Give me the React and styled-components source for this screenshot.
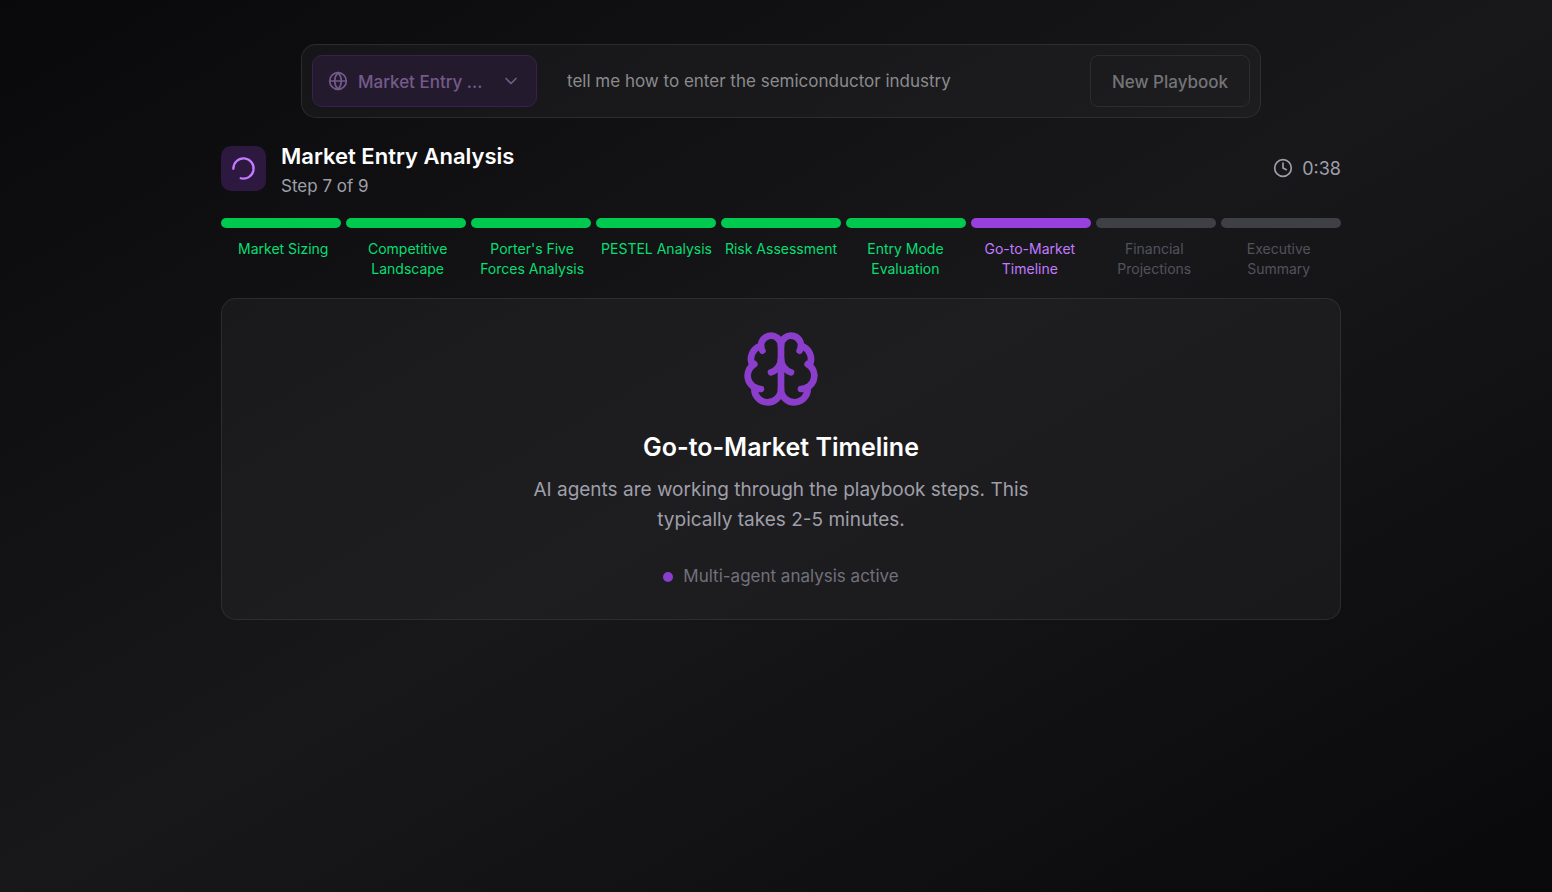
import React from "react";
import styled, { createGlobalStyle } from "styled-components";
import { Globe, ChevronDown, Clock, Brain } from "lucide-react";

const GlobalStyle = createGlobalStyle`
  *, *::before, *::after { box-sizing: border-box; }
  body {
    margin: 0;
    background: #09090b;
    font-family: Inter, "Liberation Sans", sans-serif;
  }
  h1, h2, p, ol { margin: 0; padding: 0; }
  button, input { font: inherit; }
`;

const Page = styled.main`
  min-height: 100vh;
  display: flex;
  flex-direction: column;
  align-items: center;
  padding: 44px 20px 40px 30px;
  background: linear-gradient(to bottom right, #09090b, #18181b, #09090b);
`;

const Toolbar = styled.form`
  width: 100%;
  max-width: 960px;
  display: flex;
  align-items: center;
  gap: 10px;
  padding: 10px;
  border: 1px solid rgba(63, 63, 70, 0.5);
  border-radius: 15px;
  background: rgba(39, 39, 42, 0.35);
`;

const PlaybookPicker = styled.button`
  width: 225px;
  height: 52px;
  flex: none;
  display: flex;
  align-items: center;
  gap: 10px;
  padding: 0 15px;
  border: 1px solid #3a1f50;
  border-radius: 10px;
  background: #231a2d;
  color: #745a8b;
  font-size: 17px;
  font-weight: 500;
`;

const PickerText = styled.span`
  flex: 1;
  padding-top: 2px;
  text-align: left;
  white-space: nowrap;
`;

const Query = styled.input`
  flex: 1;
  min-width: 0;
  height: 52px;
  padding: 0 20px;
  border: 0;
  background: transparent;
  color: #8b8b8d;
  font-size: 17px;
  outline: none;
`;

const NewPlaybook = styled.button`
  width: 160px;
  height: 52px;
  flex: none;
  padding: 2px 0 0;
  border: 1px solid #2d2d30;
  border-radius: 8px;
  background: transparent;
  color: #747477;
  font-size: 17px;
  font-weight: 500;
`;

const Progress = styled.section`
  width: 100%;
  max-width: 1120px;
  margin-top: 19px;
`;

const Header = styled.header`
  display: flex;
  align-items: center;
  gap: 15px;
`;

const SpinnerTile = styled.div`
  width: 45px;
  height: 45px;
  display: grid;
  place-items: center;
  border-radius: 10px;
  background: #2d193f;
  color: #c27aff;
`;

const Heading = styled.div`
  flex: 1;
  padding-top: 2px;
`;

const Title = styled.h1`
  color: #fff;
  font-size: 22px;
  font-weight: 600;
  line-height: 35px;
`;

const Subtitle = styled.p`
  color: #9f9fa9;
  font-size: 17px;
  line-height: 25px;
`;

const Elapsed = styled.div`
  display: flex;
  align-items: center;
  gap: 9px;
  color: #9f9fa9;
  font-size: 18px;
  line-height: 25px;
`;

const Bars = styled.div`
  display: flex;
  gap: 5px;
  margin-top: 19px;
`;

const barColors = { done: "#00c950", active: "#9840de", pending: "#3f3f46" };
const labelColors = { done: "#05df72", active: "#c27aff", pending: "#52525c" };

const Bar = styled.div`
  flex: 1;
  height: 10px;
  border-radius: 5px;
  background: ${({ $state }) => barColors[$state]};
`;

const Labels = styled.ol`
  display: flex;
  margin-top: 11px;
  list-style: none;
`;

const Label = styled.li`
  flex: 1 1 0;
  min-width: 0;
  padding: 0 2px;
  color: ${({ $state }) => labelColors[$state]};
  font-size: 14px;
  line-height: 20px;
  text-align: center;
`;

const Card = styled.section`
  display: flex;
  flex-direction: column;
  align-items: center;
  margin-top: 19px;
  padding: 30px;
  border: 1px solid rgba(63, 63, 70, 0.5);
  border-radius: 15px;
  background: rgba(39, 39, 42, 0.4);
  text-align: center;
`;

const StepTitle = styled.h2`
  margin-top: 21px;
  color: #fff;
  font-size: 25px;
  font-weight: 600;
  line-height: 35px;
`;

const Description = styled.p`
  max-width: 560px;
  margin-top: 10px;
  color: #9f9fa9;
  font-size: 19px;
  line-height: 30px;
`;

const Status = styled.div`
  display: flex;
  align-items: center;
  gap: 10px;
  margin-top: 29px;
  color: #71717b;
  font-size: 17px;
  line-height: 25px;
`;

const Dot = styled.span`
  width: 10px;
  height: 10px;
  border-radius: 50%;
  background: #8b3dcb;
`;

const steps = [
  ["Market Sizing", "done"],
  ["Competitive Landscape", "done"],
  ["Porter's Five Forces Analysis", "done"],
  ["PESTEL Analysis", "done"],
  ["Risk Assessment", "done"],
  ["Entry Mode Evaluation", "done"],
  ["Go-to-Market Timeline", "active"],
  ["Financial Projections", "pending"],
  ["Executive Summary", "pending"],
];

function Spinner() {
  return (
    <svg width="27" height="27" viewBox="0 0 24 24" fill="none" stroke="currentColor" strokeWidth="2" strokeLinecap="round" aria-hidden="true">
      <path d="M21 12a9 9 0 1 1-6.219-8.56" transform="rotate(178 12 12)" />
    </svg>
  );
}

export default function App() {
  return (
    <>
      <GlobalStyle />
      <Page>
        <Toolbar onSubmit={(e) => e.preventDefault()}>
          <PlaybookPicker type="button" aria-haspopup="listbox">
            <Globe size={20} strokeWidth={2} />
            <PickerText>Market Entry ...</PickerText>
            <ChevronDown size={20} strokeWidth={2} />
          </PlaybookPicker>
          <Query aria-label="Question" defaultValue="tell me how to enter the semiconductor industry" />
          <NewPlaybook type="button">New Playbook</NewPlaybook>
        </Toolbar>
        <Progress>
          <Header>
            <SpinnerTile><Spinner /></SpinnerTile>
            <Heading>
              <Title>Market Entry Analysis</Title>
              <Subtitle>Step 7 of 9</Subtitle>
            </Heading>
            <Elapsed><Clock size={20} /><span>0:38</span></Elapsed>
          </Header>
          <Bars>
            {steps.map(([name, state]) => <Bar key={name} $state={state} />)}
          </Bars>
          <Labels>
            {steps.map(([name, state]) => <Label key={name} $state={state}>{name}</Label>)}
          </Labels>
          <Card>
            <Brain size={80} strokeWidth={2} color="#8b3dcb" />
            <StepTitle>Go-to-Market Timeline</StepTitle>
            <Description>
              AI agents are working through the playbook steps. This typically takes 2-5 minutes.
            </Description>
            <Status><Dot /><span>Multi-agent analysis active</span></Status>
          </Card>
        </Progress>
      </Page>
    </>
  );
}
